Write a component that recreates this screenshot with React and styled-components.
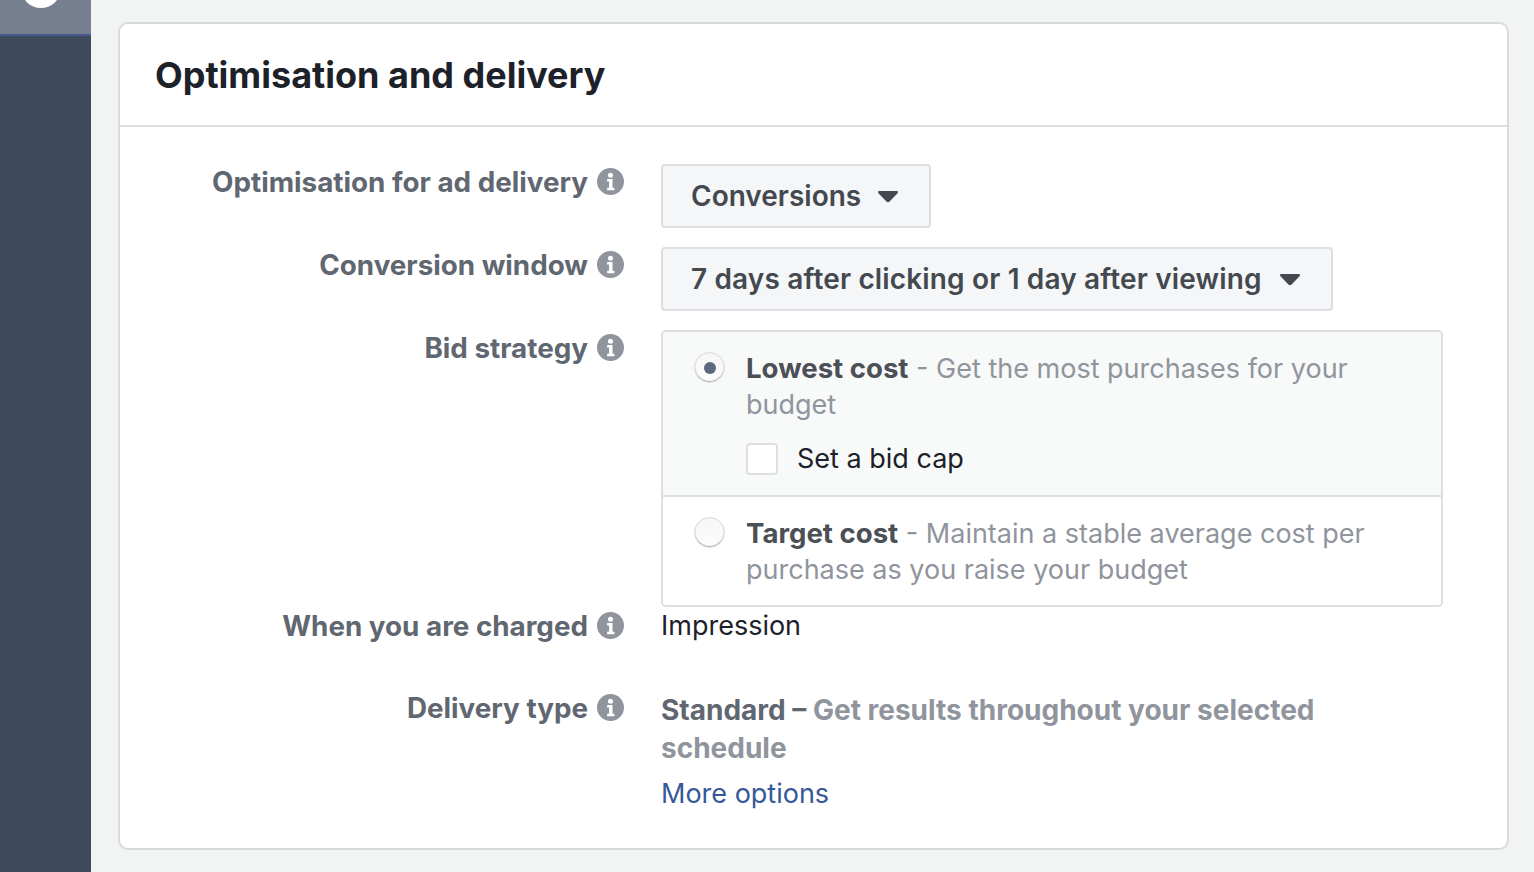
import React from "react";
import styled, { createGlobalStyle } from "styled-components";

const GlobalStyle = createGlobalStyle`
	html, body {
		margin: 0;
		height: 100%;
		overflow: hidden;
		background: #f2f4f4;
	}
	body {
		font-family: Inter, "Liberation Sans", sans-serif;
	}
`;

const Page = styled.div`
	display: flex;
	height: 872px;
`;

const Sidebar = styled.aside`
	flex: 0 0 91px;
	background: #3d4a5c;
`;

const SidebarTop = styled.div`
	position: relative;
	height: 34px;
	overflow: hidden;
	background: #767f90;
	border-bottom: 2px solid #4b5a8e;
`;

const Avatar = styled.div`
	position: absolute;
	left: 21px;
	top: -32px;
	width: 40px;
	height: 40px;
	border-radius: 50%;
	background: #fff;
`;

const Main = styled.main`
	flex: 1;
	padding: 22px 25px 22px 27px;
`;

const Card = styled.section`
	height: 828px;
	box-sizing: border-box;
	background: #fff;
	border: 2px solid #d8dadd;
	border-radius: 10px;
`;

const CardHeader = styled.header`
	height: 103px;
	box-sizing: border-box;
	padding: 29px 35px 0;
	border-bottom: 2px solid #dcdee1;
`;

const Title = styled.h2`
	margin: 0;
	font-size: 36px;
	line-height: 44px;
	font-weight: 700;
	color: #1d2129;
`;

const Form = styled.div`
	display: flex;
	flex-direction: column;
	padding-top: 37px;
`;

const Row = styled.div`
	display: grid;
	grid-template-columns: 504px 782px;
	column-gap: 37px;
	margin-bottom: ${props => props.$gap || 19}px;
`;

const LabelCell = styled.div`
	display: flex;
	justify-content: flex-end;
	align-items: center;
	gap: 9px;
	height: 34px;
`;

const Label = styled.span`
	padding-top: 2px;
	font-size: 27.8px;
	line-height: 34px;
	font-weight: 700;
	color: #606770;
`;

const Dropdown = styled.div`
	display: inline-flex;
	align-items: center;
	box-sizing: border-box;
	height: 64px;
	padding: 0 30px 0 28px;
	gap: ${props => props.$gap}px;
	font-size: 28px;
	font-weight: 600;
	letter-spacing: ${props => props.$spacing}px;
	color: #444950;
	background: #f5f6f7;
	border: 2px solid #dddfe2;
	border-radius: 4px;
`;

const Caret = styled.svg`
	width: 22px;
	height: 13px;
	flex: none;
`;

const OptionGroup = styled.div`
	box-sizing: border-box;
	width: 782px;
	height: 277px;
	border: 2px solid #dddfe2;
	border-radius: 5px;
	overflow: hidden;
`;

const Option = styled.div`
	display: grid;
	grid-template-columns: 32px 1fr;
	column-gap: 20px;
	box-sizing: border-box;
	height: ${props => props.$height}px;
	padding: 18px 40px 0 31px;
	background: ${props => (props.$selected ? "#f8f9f9" : "#fff")};
	border-bottom: ${props => (props.$selected ? "2px solid #dddfe2" : "none")};
`;

const Radio = styled.span`
	display: flex;
	align-items: center;
	justify-content: center;
	box-sizing: border-box;
	width: 31px;
	height: 31px;
	margin-top: 2px;
	border-radius: 50%;
	background: linear-gradient(#f6f6f6, #fdfdfd);
	border: 1px solid #d7d9dc;
	box-shadow: inset 0 -1px 1px #a9adb2;
	&::after {
		content: "";
		display: ${props => (props.$checked ? "block" : "none")};
		width: 12px;
		height: 12px;
		border-radius: 50%;
		background: #5c6880;
	}
`;

const OptionText = styled.div`
	font-size: 27px;
	line-height: 36px;
	color: #90949c;
`;

const OptionName = styled.span`
	font-size: 27.6px;
	font-weight: 700;
	color: #4b4f56;
`;

const CheckRow = styled.div`
	display: flex;
	align-items: center;
	gap: 19px;
	margin-top: 18px;
	font-size: 27px;
	line-height: 36px;
	color: #1d2129;
`;

const Checkbox = styled.span`
	box-sizing: border-box;
	width: 32px;
	height: 32px;
	background: #fff;
	border: 2px solid #dddfe2;
	border-radius: 4px;
`;

const PlainValue = styled.div`
	font-size: 27px;
	line-height: 36px;
	color: #1d2129;
`;

const DeliveryValue = styled.div`
	max-width: 720px;
	padding-top: 1px;
	font-size: 28px;
	line-height: 38px;
	font-weight: 700;
	color: #90949c;
`;

const DeliveryName = styled.span`
	color: #606770;
`;

const MoreOptions = styled.a`
	display: block;
	margin-top: 8px;
	font-size: 27px;
	font-weight: 400;
	color: #365899;
	line-height: 38px;
`;

const InfoIcon = () => (
	<svg width="27" height="27" viewBox="0 0 28 28" aria-hidden="true">
		<circle cx="14" cy="14" r="14" fill="#90949c" />
		<circle cx="14" cy="7.5" r="2.6" fill="#fff" />
		<path d="M10.5 11.5h5.6v9h2v2.6h-7.6v-2.6h2v-6.4h-2z" fill="#fff" />
	</svg>
);

const FIELDS = [
	{ label: "Optimisation for ad delivery", dropdown: "Conversions", gap: 16, spacing: 0 },
	{ label: "Conversion window", dropdown: "7 days after clicking or 1 day after viewing", gap: 17, spacing: 0.15 }
];

const Field = ({ label, gap, children }) => (
	<Row $gap={gap}>
		<LabelCell>
			<Label>{label}</Label>
			<InfoIcon />
		</LabelCell>
		<div>{children}</div>
	</Row>
);

const App = () => (
	<>
		<GlobalStyle />
		<Page>
			<Sidebar>
				<SidebarTop>
					<Avatar />
				</SidebarTop>
			</Sidebar>
			<Main>
				<Card>
					<CardHeader>
						<Title>Optimisation and delivery</Title>
					</CardHeader>
					<Form>
						{FIELDS.map(field => (
							<Field key={field.label} label={field.label}>
								<Dropdown $gap={field.gap} $spacing={field.spacing}>
									{field.dropdown}
									<Caret viewBox="0 0 22 13">
										<path d="M1 2a1 1 0 0 1 1-1h18a1 1 0 0 1 1 1c0 .6-.3 1-.7 1.4L12.6 11.6a2.4 2.4 0 0 1-3.2 0L1.700 3.400C1.300 3 1 2.600 1 2z" fill="#444950" />
									</Caret>
								</Dropdown>
							</Field>
						))}
						<Field label="Bid strategy" gap={1}>
							<OptionGroup>
								<Option $selected $height={165}>
									<Radio $checked />
									<OptionText>
										<OptionName>Lowest cost</OptionName> - Get the most purchases for your budget
										<CheckRow>
											<Checkbox />
											Set a bid cap
										</CheckRow>
									</OptionText>
								</Option>
								<Option $height={110}>
									<Radio />
									<OptionText>
										<OptionName>Target cost</OptionName> - Maintain a stable average cost per purchase as you raise your budget
									</OptionText>
								</Option>
							</OptionGroup>
						</Field>
						<Field label="When you are charged" gap={46}>
							<PlainValue>Impression</PlainValue>
						</Field>
						<Field label="Delivery type">
							<DeliveryValue>
								<DeliveryName>Standard – </DeliveryName>
								Get results throughout your selected schedule
								<MoreOptions>More options</MoreOptions>
							</DeliveryValue>
						</Field>
					</Form>
				</Card>
			</Main>
		</Page>
	</>
);

export default App;
